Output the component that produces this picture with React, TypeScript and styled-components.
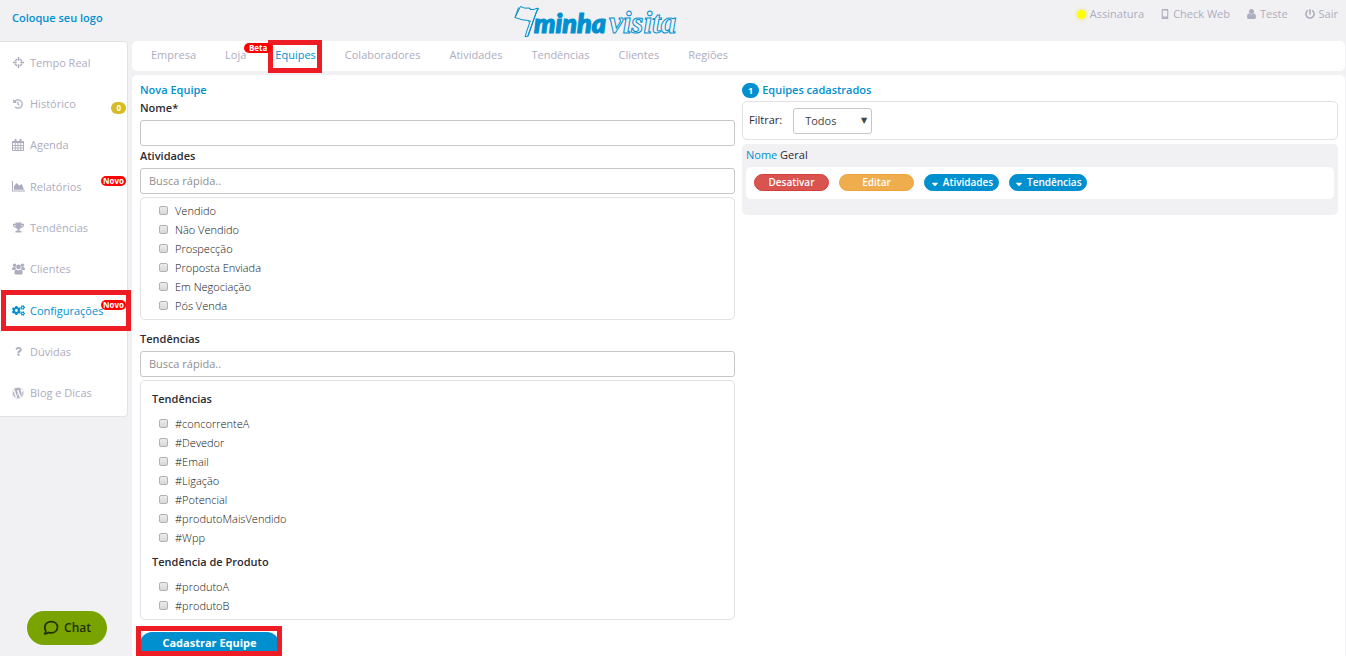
import React from 'react';
import styled, { createGlobalStyle, css } from 'styled-components';
import { FaTrophy, FaCogs, FaQuestion, FaWordpress, FaPowerOff, FaHistory, FaCaretDown } from 'react-icons/fa';

const blue = '#0090d0';
const muted = '#adadbf';
const page = '#f1f1f3';
const line = '#e2e2e6';
const red = '#ee1c25';

const Global = createGlobalStyle`
  *, *::before, *::after { box-sizing: border-box; }
  body {
    margin: 0;
    background: ${page};
    color: #2b2b33;
    font: 400 11px/18px "Open Sans", "Noto Sans", sans-serif;
  }
  button, input, select { font: inherit; margin: 0; }
  a { color: inherit; text-decoration: none; }
`;

const Page = styled.div`
  min-height: 100vh;
  display: flex;
  flex-direction: column;
`;

const Header = styled.header`
  height: 41px;
  display: grid;
  grid-template-columns: 1fr auto 1fr;
  padding: 0 8px 0 12px;
`;

const LogoSlot = styled.a`
  justify-self: start;
  align-self: start;
  margin-top: 9px;
  color: ${blue};
  font-weight: 600;
`;

const Brand = styled.a`
  display: block;
  margin-right: 156px;
  height: 41px;
  svg { display: block; }
`;

const UserMenu = styled.nav`
  justify-self: end;
  display: flex;
  gap: 17px;
  margin-top: 5px;
  height: 18px;
  color: ${muted};
  a { display: flex; align-items: center; gap: 4px; white-space: nowrap; }
`;

const Dot = styled.span`
  width: 9px;
  height: 9px;
  border-radius: 50%;
  background: #ff0;
  box-shadow: 0 0 4px #e6e65a;
`;

const Body = styled.div`
  flex: 1;
  display: flex;
  align-items: stretch;
  gap: 4px;
`;

const Sidebar = styled.nav`
  flex: 0 0 128px;
  align-self: flex-start;
  display: flex;
  flex-direction: column;
  min-height: 376px;
  padding-bottom: 2px;
  background: #fff;
  border: 1px solid ${line};
  border-left: 0;
  border-radius: 0 4px 4px 0;
`;

const highlight = css`
  &::after {
    content: '';
    position: absolute;
    border: 5px solid ${red};
    pointer-events: none;
    z-index: 1;
  }
`;

const SideLink = styled.a<{ $active?: boolean }>`
  position: relative;
  flex: 1;
  display: flex;
  align-items: center;
  gap: 5px;
  padding-left: 11px;
  white-space: nowrap;
  color: ${p => (p.$active ? blue : muted)};
  ${p => p.$active && highlight}
  &::after { inset: 0 -4px 0 1px; }
`;

const IconBox = styled.span`
  flex: 0 0 14px;
  display: flex;
  justify-content: center;
`;

const Pill = styled.span<{ $tone: 'red' | 'gold' }>`
  position: absolute;
  right: 1px;
  top: ${p => (p.$tone === 'gold' ? '19px' : '10px')};
  z-index: 2;
  padding: 0 ${p => (p.$tone === 'gold' ? '5px' : '2px')};
  border-radius: 8px;
  background: ${p => (p.$tone === 'gold' ? '#d5bb26' : '#f00')};
  color: #fff;
  font-size: 8px;
  font-weight: 700;
  line-height: ${p => (p.$tone === 'gold' ? '12px' : '10px')};
`;

const Main = styled.main`
  flex: 1;
  min-width: 0;
  display: flex;
  flex-direction: column;
  gap: 4px;
  padding-right: 1px;
`;

const Tabs = styled.nav`
  display: flex;
  align-items: center;
  gap: 29px;
  height: 30px;
  padding: 0 0 2px 19px;
  background: #fff;
  border-radius: 5px;
  color: ${muted};
`;

const Tab = styled.a<{ $active?: boolean }>`
  position: relative;
  color: ${p => (p.$active ? blue : muted)};
  ${p => p.$active && highlight}
  &::after { inset: -6px -6px -9px -7px; }
`;

const TabPill = styled(Pill)`
  top: -3px;
  right: -26px;
  padding: 0 5px;
`;

const Content = styled.div`
  flex: 1;
  display: grid;
  grid-template-columns: calc(50% - 4px) 1fr;
  gap: 7px;
  padding: 6px 7px 0 8px;
  background: #fff;
  border-radius: 5px 5px 0 0;
`;

const Form = styled.form`
  display: flex;
  flex-direction: column;
  align-items: stretch;
`;

const Heading = styled.h2`
  display: flex;
  align-items: center;
  gap: 3px;
  margin: 0;
  color: ${blue};
  font-size: 11px;
  font-weight: 600;
`;

const Field = styled.div<{ $gap?: number }>`
  display: flex;
  flex-direction: column;
  gap: 3px;
  margin-top: ${p => p.$gap ?? 0}px;
  > label { font-weight: 600; }
`;

const TextInput = styled.input`
  width: 100%;
  height: 26px;
  padding: 0 8px 2px;
  border: 1px solid #c6c6c6;
  border-radius: 3px;
  background: #fff;
  color: #333;
  &::placeholder { color: #8f8f8f; opacity: 1; }
`;

const OptionBox = styled.div`
  padding: 4px 11px 3px;
  border: 1px solid ${line};
  border-radius: 5px;
`;

const GroupTitle = styled.h3`
  margin: 5px 0 7px;
  font-size: 11px;
  font-weight: 600;
`;

const Option = styled.label`
  display: flex;
  align-items: center;
  gap: 7px;
  height: 19px;
  padding: 0 0 2px 7px;
  font-weight: 300;
  color: #111;
`;

const Check = styled.input`
  appearance: none;
  width: 9px;
  height: 9px;
  margin: 0;
  border: 1px solid #b2b2b2;
  border-radius: 2px;
  background: linear-gradient(#ececec, #d8d8d8);
  &:checked { background: ${blue}; }
`;

const SubmitWrap = styled.div`
  position: relative;
  align-self: flex-start;
  margin-top: 12px;
  height: 22px;
  ${highlight}
  &::after { inset: -6px -3px -2px -4px; }
`;

const Submit = styled.button`
  width: 139px;
  height: 24px;
  padding: 0 0 2px;
  border: 0;
  border-radius: 12px 12px 0 0;
  background: ${blue};
  color: #fff;
  font-weight: 700;
`;

const Count = styled.span`
  padding: 0 6px;
  border-radius: 8px;
  background: ${blue};
  color: #fff;
  font-size: 9px;
  font-weight: 700;
  line-height: 15px;
`;

const Filter = styled.div`
  display: flex;
  align-items: center;
  gap: 11px;
  height: 39px;
  margin-top: 2px;
  padding: 0 6px;
  border: 1px solid ${line};
  border-radius: 5px;
  label { padding-bottom: 2px; }
`;

const SelectWrap = styled.span`
  position: relative;
  &::after {
    content: '▼';
    position: absolute;
    right: 5px;
    top: 4px;
    color: #444;
    font: 8px/18px "DejaVu Sans", sans-serif;
    pointer-events: none;
  }
`;

const Select = styled.select`
  display: block;
  appearance: none;
  width: 79px;
  height: 26px;
  padding: 0 11px;
  border: 1px solid #c6c6c6;
  border-radius: 3px;
  background: #fff;
  color: #444;
`;

const Card = styled.article`
  margin-top: 4px;
  padding: 2px 4px 16px;
  border-radius: 5px;
  background: ${page};
`;

const CardName = styled.p`
  margin: 0 0 3px;
  b { color: ${blue}; font-weight: 400; }
`;

const Actions = styled.div`
  display: flex;
  gap: 10px;
  padding: 7px 8px 8px;
  border-radius: 5px;
  background: #fff;
`;

const Action = styled.button<{ $color: string; $edge: string }>`
  display: flex;
  align-items: center;
  justify-content: center;
  gap: 3px;
  min-width: 75px;
  height: 17px;
  padding: 0 4px;
  border: 1px solid ${p => p.$edge};
  border-radius: 9px;
  background: ${p => p.$color};
  color: #fff;
  font-size: 10px;
  font-weight: 600;
  line-height: 15px;
  svg { margin-top: 3px; }
`;

const Chat = styled.button`
  position: fixed;
  left: 27px;
  bottom: 11px;
  display: flex;
  align-items: center;
  justify-content: center;
  gap: 5px;
  width: 80px;
  height: 34px;
  border: 0;
  border-radius: 17px;
  background: #78a300;
  color: #222f00;
  font-size: 12px;
  font-weight: 600;
`;

const Crosshair = () => (
  <svg width="11" height="11" viewBox="0 0 11 11" fill="none" stroke="currentColor" strokeWidth="1.5">
    <path d="M2.200 4.200q.5-1.500 2-2M6.800 2.200q1.500.5 2 2M8.800 6.800q-.5 1.500-2 2M4.200 8.800q-1.500-.5-2-2" />
    <path d="M5.500 0v3.700M5.500 7.300V11M0 5.500h3.700M7.300 5.500H11" />
  </svg>
);

const Calendar = () => (
  <svg width="12" height="12" viewBox="0 0 12 12" fill="none" stroke="currentColor">
    <path d="M.5 2.500h11v9H.5z" />
    <path d="M.5 3h11" strokeWidth="2" />
    <path d="M3.500 0v3M8.500 0v3" strokeWidth="2" />
    <path d="M.5 6.500h11M.5 9h11M3.300 4v7.500M6 4v7.500M8.700 4v7.500" strokeWidth=".9" />
  </svg>
);

const AreaChart = () => (
  <svg width="13" height="11" viewBox="0 0 13 11" fill="currentColor">
    <path d="M0 0h1v9.500h12v1H0z" />
    <path d="M2 8.700V5.200L4.600 2l2.600 2.600L9.800 3l2.200 5.700z" />
  </svg>
);

const People = () => (
  <svg width="13" height="12" viewBox="0 0 13 12" fill="currentColor">
    <circle cx="2.600" cy="2.200" r="1.700" />
    <circle cx="10.400" cy="2.200" r="1.700" />
    <circle cx="6.500" cy="3.900" r="2.300" />
    <path d="M0 6.500Q0 4 1.300 4q1.200.6 2.300.2.1 1.300.9 2.100-1.200 0-1.900.7H1Q0 7 0 6.500zM13 6.500Q13 4 11.700 4q-1.200.6-2.300.2-.1 1.300-.9 2.100 1.200 0 1.900.7H12q1 0 1-.5z" />
    <path d="M2.400 10q0-3.300 2-3.300 2.100 1.300 4.200 0 2 0 2 3.300 0 1.600-1.500 1.600H3.900q-1.500 0-1.500-1.600z" />
  </svg>
);

const Person = () => (
  <svg width="9" height="10" viewBox="0 0 9 10" fill="currentColor">
    <circle cx="4.500" cy="2.600" r="2.500" />
    <path d="M0 8.300Q0 4.600 2.100 4.600q2.400 1.600 4.800 0Q9 4.600 9 8.300 9 10 7.500 10h-6Q0 10 0 8.300z" />
  </svg>
);

const Phone = () => (
  <svg width="8" height="10" viewBox="0 0 8 10">
    <path fill="currentColor" fillRule="evenodd" d="M1.700 0h4.600Q7.300 0 7.300 1v8q0 1-1 1H1.700q-1 0-1-1V1q0-1 1-1zM1.800 1.600v6h4.400v-6zM3.500 8.400v.8h1v-.8z" />
  </svg>
);

const Bubble = () => (
  <svg width="16" height="16" viewBox="0 0 16 16" fill="none" stroke="currentColor" strokeWidth="1.7" strokeLinejoin="round">
    <path d="M8.300 1.600c3.600 0 6.200 2.400 6.200 5.600s-2.600 5.700-6.200 5.700c-1 0-1.900-.1-2.700-.5-.9.9-2.200 1.400-4 1.500.9-.9 1.400-1.900 1.300-2.900C2.200 10 1.800 8.700 1.800 7.200c0-3.200 2.800-5.600 6.500-5.600z" />
  </svg>
);

const BrandMark = () => (
  <svg width="166" height="40" viewBox="0 0 166 40" role="img" aria-label="minhavisita">
    <g fill="none" stroke={blue} strokeWidth="1">
      <path d="M6.500 6.500q4 2.500 9 1.500l.5 1.500q4 .5 8-1.500l-1.500 3.500L13.500 36.500H11l4.500-13.500-1-2.500q-6 0-13.500-3z" />
      <path d="M24 8q.5 1 .5.800L22.500 12 14 36.500M4.500 7.500l-3.500 10M15.500 8l1 1.500M14.500 20.500l2.500 1" />
    </g>
    <text x="20" y="33" fontFamily="Lato, sans-serif" fontStyle="italic" fontWeight="900" fontSize="27" fill={blue} stroke={blue} strokeWidth="1.2">minha</text>
    <text x="95" y="33" fontFamily="'Liberation Serif', serif" fontStyle="italic" fontWeight="700" fontSize="31" fill={page} stroke={blue} strokeWidth="1">visita</text>
  </svg>
);

type SideItem = { label: string; icon: React.ReactNode; pill?: string; tone?: 'red' | 'gold'; active?: boolean };

const sideItems: SideItem[] = [
  { label: 'Tempo Real', icon: <Crosshair /> },
  { label: 'Histórico', icon: <FaHistory size={10} />, pill: '0', tone: 'gold' },
  { label: 'Agenda', icon: <Calendar /> },
  { label: 'Relatórios', icon: <AreaChart />, pill: 'Novo', tone: 'red' },
  { label: 'Tendências', icon: <FaTrophy size={11} /> },
  { label: 'Clientes', icon: <People /> },
  { label: 'Configurações', icon: <FaCogs size={13} />, pill: 'Novo', tone: 'red', active: true },
  { label: 'Dúvidas', icon: <FaQuestion size={9} /> },
  { label: 'Blog e Dicas', icon: <FaWordpress size={12} /> },
];

const tabs = ['Empresa', 'Loja', 'Equipes', 'Colaboradores', 'Atividades', 'Tendências', 'Clientes', 'Regiões'];
const activities = ['Vendido', 'Não Vendido', 'Prospecção', 'Proposta Enviada', 'Em Negociação', 'Pós Venda'];
const trends = [
  { title: 'Tendências', items: ['#concorrenteA', '#Devedor', '#Email', '#Ligação', '#Potencial', '#produtoMaisVendido', '#Wpp'] },
  { title: 'Tendência de Produto', items: ['#produtoA', '#produtoB'] },
];

const Options = ({ items }: { items: string[] }) => (
  <>
    {items.map(item => (
      <Option key={item}>
        <Check type="checkbox" />
        {item}
      </Option>
    ))}
  </>
);

export default function App() {
  return (
    <Page>
      <Global />
      <Header>
        <LogoSlot href="#">Coloque seu logo</LogoSlot>
        <Brand href="#"><BrandMark /></Brand>
        <UserMenu>
          <a href="#"><Dot />Assinatura</a>
          <a href="#"><Phone />Check Web</a>
          <a href="#"><Person />Teste</a>
          <a href="#"><FaPowerOff size={10} />Sair</a>
        </UserMenu>
      </Header>
      <Body>
        <Sidebar>
          {sideItems.map(item => (
            <SideLink key={item.label} href="#" $active={item.active}>
              <IconBox>{item.icon}</IconBox>
              {item.label}
              {item.pill && <Pill $tone={item.tone ?? 'red'}>{item.pill}</Pill>}
            </SideLink>
          ))}
        </Sidebar>
        <Main>
          <Tabs>
            {tabs.map(tab => (
              <Tab key={tab} href="#" $active={tab === 'Equipes'}>
                {tab}
                {tab === 'Loja' && <TabPill $tone="red">Beta</TabPill>}
              </Tab>
            ))}
          </Tabs>
          <Content>
            <Form onSubmit={e => e.preventDefault()}>
              <Heading>Nova Equipe</Heading>
              <Field>
                <label htmlFor="name">Nome*</label>
                <TextInput id="name" type="text" />
              </Field>
              <Field $gap={1}>
                <label htmlFor="activities">Atividades</label>
                <TextInput id="activities" type="text" placeholder="Busca rápida.." />
                <OptionBox><Options items={activities} /></OptionBox>
              </Field>
              <Field $gap={10}>
                <label htmlFor="trends">Tendências</label>
                <TextInput id="trends" type="text" placeholder="Busca rápida.." />
                <OptionBox>
                  {trends.map(group => (
                    <React.Fragment key={group.title}>
                      <GroupTitle>{group.title}</GroupTitle>
                      <Options items={group.items} />
                    </React.Fragment>
                  ))}
                </OptionBox>
              </Field>
              <SubmitWrap><Submit type="submit">Cadastrar Equipe</Submit></SubmitWrap>
            </Form>
            <section>
              <Heading><Count>1</Count>Equipes cadastrados</Heading>
              <Filter>
                <label htmlFor="filter">Filtrar:</label>
                <SelectWrap>
                  <Select id="filter"><option>Todos</option></Select>
                </SelectWrap>
              </Filter>
              <Card>
                <CardName><b>Nome</b> Geral</CardName>
                <Actions>
                  <Action type="button" $color="#d9534f" $edge="#d43f3a">Desativar</Action>
                  <Action type="button" $color="#f0ad4e" $edge="#eea236">Editar</Action>
                  <Action type="button" $color={blue} $edge={blue}><FaCaretDown size={10} />Atividades</Action>
                  <Action type="button" $color={blue} $edge={blue}><FaCaretDown size={10} />Tendências</Action>
                </Actions>
              </Card>
            </section>
          </Content>
        </Main>
      </Body>
      <Chat type="button"><Bubble />Chat</Chat>
    </Page>
  );
}
